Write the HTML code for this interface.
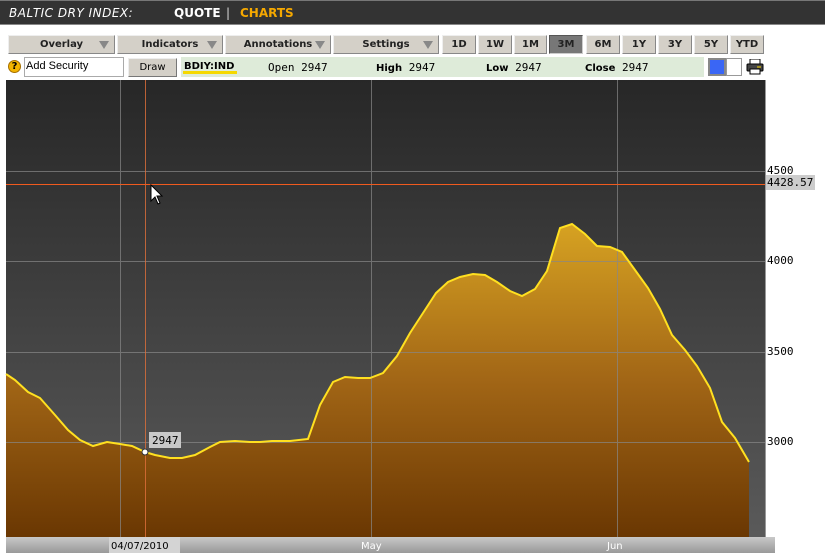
<!DOCTYPE html>
<html><head><style>
*{margin:0;padding:0;box-sizing:border-box}
body{width:825px;height:553px;background:#fff;position:relative;overflow:hidden;font-family:"DejaVu Sans","Liberation Sans",sans-serif}
.hdr{position:absolute;left:0;top:0;width:825px;height:25px;background:#333;border-top:1px solid #777;border-bottom:1px solid #888}
.hdr span{position:absolute;top:5px;font-size:12px;font-weight:bold;color:#fff}
.b{position:absolute;top:35px;height:19px;background:#d4d0c8;border:1px solid #eee;border-right-color:#888;border-bottom-color:#888;font-size:10px;font-weight:bold;color:#222;text-align:center;line-height:17px}
.b i{position:absolute;right:5px;top:5px;width:0;height:0;border-left:5px solid transparent;border-right:5px solid transparent;border-top:8px solid #888}
.t{position:absolute;font-size:11px;color:#000;font-family:"DejaVu Sans Mono","Liberation Mono",monospace}
.lbl{position:absolute;left:767px;font-size:11px;color:#000;font-family:"DejaVu Sans Mono",monospace}
</style></head><body>
<div class="hdr">
<span style="left:9px;font-style:italic;font-weight:normal;letter-spacing:0.5px">BALTIC DRY INDEX:</span>
<span style="left:174px">QUOTE</span>
<span style="left:226px;font-weight:normal;color:#ddd">|</span>
<span style="left:240px;color:#f5a800">CHARTS</span>
</div>
<div class="b" style="left:8px;width:107px">Overlay<i></i></div>
<div class="b" style="left:117px;width:106px">Indicators<i></i></div>
<div class="b" style="left:225px;width:106px">Annotations<i></i></div>
<div class="b" style="left:333px;width:106px">Settings<i></i></div>
<div class="b" style="left:442px;width:34px">1D</div>
<div class="b" style="left:478px;width:34px">1W</div>
<div class="b" style="left:514px;width:33px">1M</div>
<div class="b" style="left:549px;width:34px;background:#777;border-color:#555 #ccc #ccc #555">3M</div>
<div class="b" style="left:586px;width:34px">6M</div>
<div class="b" style="left:622px;width:34px">1Y</div>
<div class="b" style="left:658px;width:34px">3Y</div>
<div class="b" style="left:694px;width:34px">5Y</div>
<div class="b" style="left:730px;width:34px">YTD</div>
<div style="position:absolute;left:8px;top:60px;width:13px;height:13px;border-radius:50%;background:#f3b400;border:1px solid #a67000;font-size:10px;font-weight:bold;text-align:center;line-height:11px">?</div>
<div style="position:absolute;left:24px;top:57px;width:100px;height:20px;border:1px solid #aaa;font-size:11px;padding:2px 1px;font-family:'Liberation Sans',sans-serif">Add Security</div>
<div style="position:absolute;left:128px;top:58px;width:49px;height:19px;background:#d4d0c8;border:1px solid #eee;border-right-color:#777;border-bottom-color:#777;font-size:10px;text-align:center;line-height:17px">Draw</div>
<div style="position:absolute;left:181px;top:57px;width:523px;height:20px;background:#deebd9"></div>
<div class="t" style="left:184px;top:61px;font-weight:bold;font-family:'DejaVu Sans',sans-serif;font-size:10px">BDIY:IND</div>
<div style="position:absolute;left:183px;top:71px;width:54px;height:3px;background:#f5d800"></div>
<div class="t" style="left:268px;top:61px">Open 2947</div>
<div class="t" style="left:376px;top:61px"><b style="font-family:'DejaVu Sans',sans-serif;font-size:10px">High</b> 2947</div>
<div class="t" style="left:486px;top:61px"><b style="font-family:'DejaVu Sans',sans-serif;font-size:10px">Low</b> 2947</div>
<div class="t" style="left:585px;top:61px"><b style="font-family:'DejaVu Sans',sans-serif;font-size:10px">Close</b> 2947</div>
<div style="position:absolute;left:708px;top:58px;width:18px;height:18px;background:#888;padding:2px"><div style="width:14px;height:14px;background:#3a66f5"></div></div>
<div style="position:absolute;left:726px;top:58px;width:16px;height:18px;border:1px solid #999;background:#fff"></div>
<svg style="position:absolute;left:746px;top:59px" width="18" height="16"><rect x="4" y="0" width="10" height="6" fill="#fff" stroke="#000"/><rect x="1" y="5" width="16" height="7" rx="1" fill="#444" stroke="#000"/><rect x="4" y="10" width="10" height="5" fill="#fff" stroke="#000"/><line x1="11" y1="8" x2="15" y2="8" stroke="#fd0"/></svg>
<svg style="position:absolute;left:0;top:0" width="825" height="553">
<defs>
<linearGradient id="bg" x1="0" y1="0" x2="0" y2="1"><stop offset="0" stop-color="#272727"/><stop offset="1" stop-color="#5a5a5a"/></linearGradient>
<linearGradient id="fl" gradientUnits="userSpaceOnUse" x1="0" y1="222" x2="0" y2="537"><stop offset="0" stop-color="#d7a322"/><stop offset="0.5" stop-color="#a26616"/><stop offset="1" stop-color="#6a3702"/></linearGradient>
<linearGradient id="ax" x1="0" y1="0" x2="0" y2="1"><stop offset="0" stop-color="#c8c8c8"/><stop offset="1" stop-color="#999"/></linearGradient>
</defs>
<rect x="6" y="80" width="759" height="457" fill="url(#bg)"/>
<polygon fill="url(#fl)" points="6,374 15,380 28,392 40,398 55,415 68,430 80,440 93,446 107,442 120,444 132,446 145,452 155,455 170,458 182,458 195,455 210,447 220,442 235,441 250,442 260,442 272,441 290,441 308,439 320,405 333,382 345,377 358,378 370,378 383,373 397,356 410,333 423,313 436,293 448,282 460,277 473,274 485,275 497,282 510,291 522,296 535,289 547,271 560,228 572,224 585,234 597,246 610,247 622,252 635,270 648,288 660,309 672,335 685,350 697,366 710,388 722,422 735,438 749,462 749,537 6,537"/>
<g stroke="#888" stroke-width="1" opacity="0.7">
<line x1="6" y1="171.5" x2="765" y2="171.5"/><line x1="6" y1="261.5" x2="765" y2="261.5"/><line x1="6" y1="352.5" x2="765" y2="352.5"/><line x1="6" y1="442.5" x2="765" y2="442.5"/>
<line x1="120.5" y1="80" x2="120.5" y2="537"/><line x1="371.5" y1="80" x2="371.5" y2="537"/><line x1="617.5" y1="80" x2="617.5" y2="537"/>
</g>
<polyline fill="none" stroke="#ffe020" stroke-width="2" points="6,374 15,380 28,392 40,398 55,415 68,430 80,440 93,446 107,442 120,444 132,446 145,452 155,455 170,458 182,458 195,455 210,447 220,442 235,441 250,442 260,442 272,441 290,441 308,439 320,405 333,382 345,377 358,378 370,378 383,373 397,356 410,333 423,313 436,293 448,282 460,277 473,274 485,275 497,282 510,291 522,296 535,289 547,271 560,228 572,224 585,234 597,246 610,247 622,252 635,270 648,288 660,309 672,335 685,350 697,366 710,388 722,422 735,438 749,462"/>
<line x1="145.5" y1="80" x2="145.5" y2="537" stroke="#e0703a" stroke-width="1" opacity="0.8"/>
<line x1="6" y1="184.5" x2="765" y2="184.5" stroke="#f05a1e" stroke-width="1"/>
<circle cx="145" cy="452" r="3" fill="#fff" stroke="#333"/>
<rect x="149" y="432" width="32" height="16" fill="#c8c8c8"/>
<text x="152" y="444" font-size="11" font-family="DejaVu Sans Mono,monospace">2947</text>
<line x1="765.5" y1="80" x2="765.5" y2="537" stroke="#999"/>
<rect x="6" y="537" width="769" height="16" fill="url(#ax)"/>
<rect x="109" y="537" width="71" height="16" fill="#d4d4d4"/>
<text x="111" y="549" font-size="10" font-family="DejaVu Sans,sans-serif" fill="#000">04/07/2010</text>
<text x="361" y="549" font-size="10" font-family="DejaVu Sans,sans-serif" fill="#fff">May</text>
<text x="607" y="549" font-size="10" font-family="DejaVu Sans,sans-serif" fill="#fff">Jun</text>
<path d="M151 185 L151 201 L155 197 L158 204 L160 203 L157 196 L162 196 Z" fill="#fff" stroke="#000" stroke-width="1"/>
<rect x="766" y="175" width="49" height="15" fill="#ccc"/>
</svg>
<div class="lbl" style="top:164px">4500</div>
<div class="lbl" style="top:176px">4428.57</div>
<div class="lbl" style="top:254px">4000</div>
<div class="lbl" style="top:345px">3500</div>
<div class="lbl" style="top:435px">3000</div>
</body></html>
